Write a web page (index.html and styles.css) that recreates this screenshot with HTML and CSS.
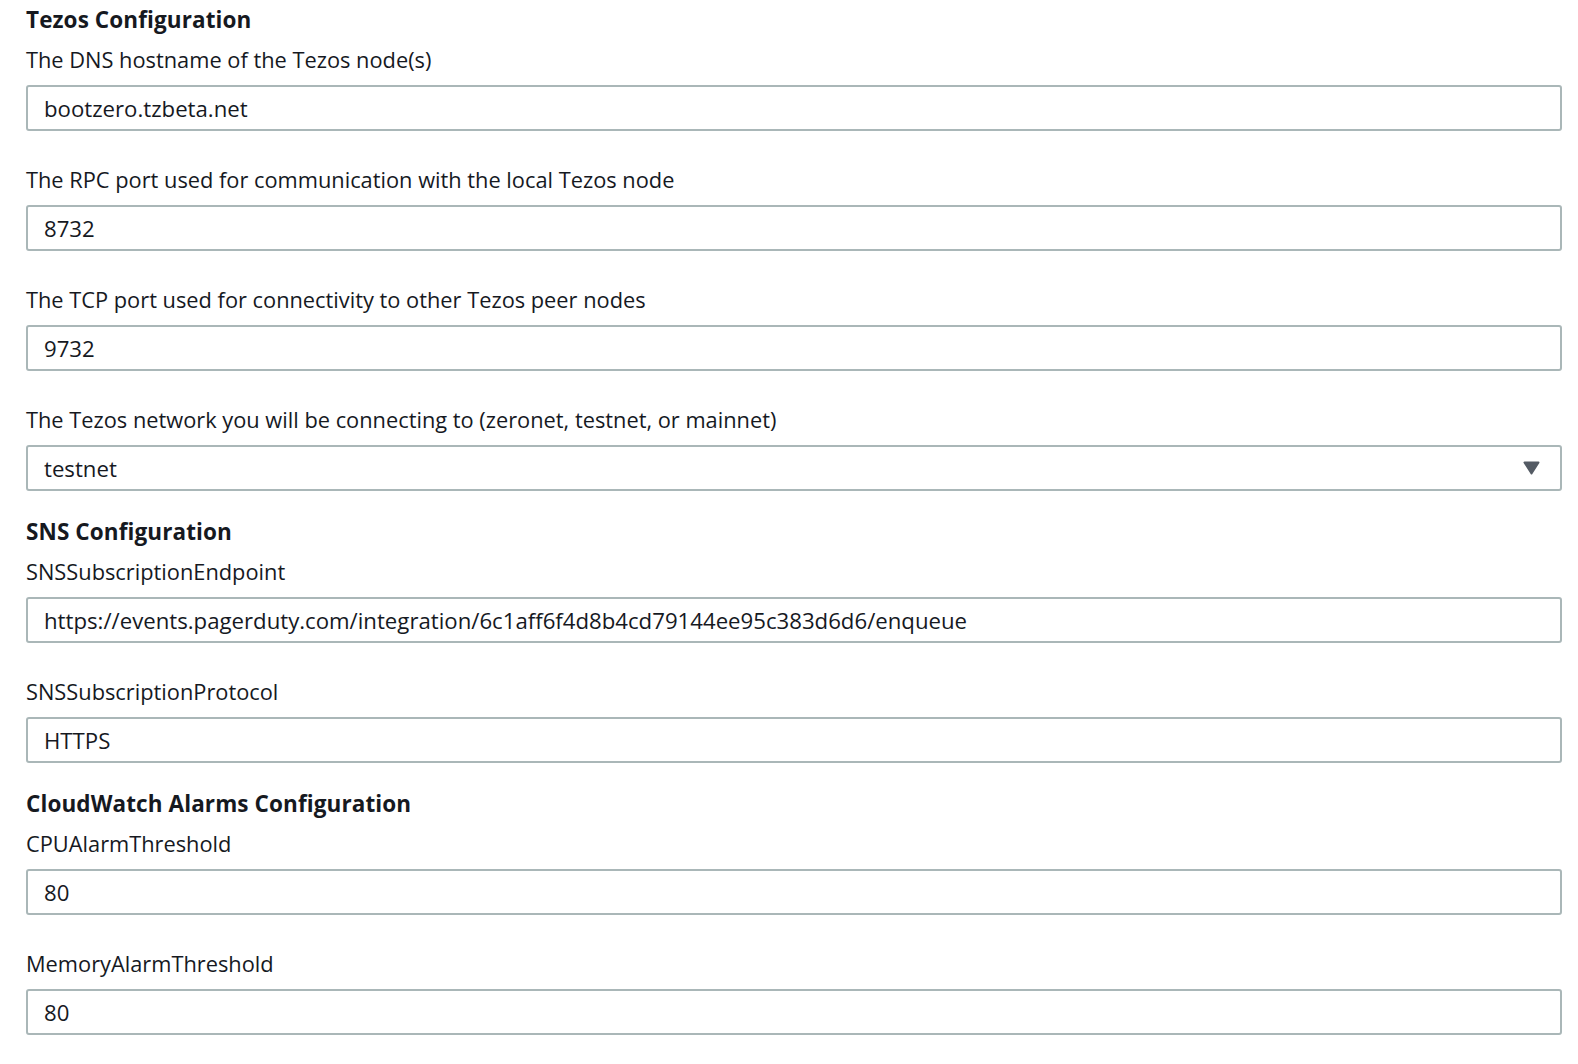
FILE: index.html
```html
<!DOCTYPE html>
<html lang="en">
<head>
<meta charset="utf-8">
<title>Stack parameters</title>
<link rel="stylesheet" href="styles.css">
</head>
<body>
<main class="form">
  <section class="section">
    <h2 class="section-title">Tezos Configuration</h2>
    <div class="field">
      <label class="label" for="f1">The DNS hostname of the Tezos node(s)</label>
      <input class="input" id="f1" type="text" value="bootzero.tzbeta.net">
    </div>
    <div class="field">
      <label class="label" for="f2">The RPC port used for communication with the local Tezos node</label>
      <input class="input" id="f2" type="text" value="8732">
    </div>
    <div class="field">
      <label class="label" for="f3">The TCP port used for connectivity to other Tezos peer nodes</label>
      <input class="input" id="f3" type="text" value="9732">
    </div>
    <div class="field">
      <label class="label" for="f4">The Tezos network you will be connecting to (zeronet, testnet, or mainnet)</label>
      <div class="select-wrap">
        <select class="input select" id="f4">
          <option>zeronet</option>
          <option selected>testnet</option>
          <option>mainnet</option>
        </select>
        <svg class="caret" width="17" height="14" viewBox="0 0 17 14" aria-hidden="true">
          <path d="M1.5 1.5 H15.5 L8.5 12.5 Z" fill="#545b64" stroke="#545b64" stroke-width="2" stroke-linejoin="round"/>
        </svg>
      </div>
    </div>
  </section>

  <section class="section">
    <h2 class="section-title">SNS Configuration</h2>
    <div class="field">
      <label class="label" for="f5">SNSSubscriptionEndpoint</label>
      <input class="input" id="f5" type="text" value="https://events.pagerduty.com/integration/6c1aff6f4d8b4cd79144ee95c383d6d6/enqueue">
    </div>
    <div class="field">
      <label class="label" for="f6">SNSSubscriptionProtocol</label>
      <input class="input" id="f6" type="text" value="HTTPS">
    </div>
  </section>

  <section class="section">
    <h2 class="section-title">CloudWatch Alarms Configuration</h2>
    <div class="field">
      <label class="label" for="f7">CPUAlarmThreshold</label>
      <input class="input" id="f7" type="text" value="80">
    </div>
    <div class="field">
      <label class="label" for="f8">MemoryAlarmThreshold</label>
      <input class="input" id="f8" type="text" value="80">
    </div>
  </section>
</main>
</body>
</html>
```

FILE: styles.css
```css
html, body {
  margin: 0;
  padding: 0;
  background: #ffffff;
}

body {
  font-family: "Open Sans", "Noto Sans", "Liberation Sans", sans-serif;
  color: #16191f;
}

.form {
  padding: 0 16px 0 26px;
  display: flex;
  flex-direction: column;
}

.section + .section {
  margin-top: 21px;
}

.section-title {
  margin: 0 0 5px;
  font-size: 22.5px;
  font-weight: 700;
  line-height: 40px;
  height: 40px;
  letter-spacing: 0.1px;
}

.field {
  display: flex;
  flex-direction: column;
}

.field + .field {
  margin-top: 34px;
}

.label {
  font-size: 21.8px;
  line-height: 30px;
  height: 30px;
  margin-bottom: 10px;
  white-space: nowrap;
}

.input {
  box-sizing: border-box;
  width: 100%;
  height: 46px;
  margin: 0;
  border: 2px solid #aab7b8;
  border-radius: 3px;
  padding: 0 15px 0 16px;
  font-family: inherit;
  font-size: 22.2px;
  color: #16191f;
  background: #ffffff;
  outline: none;
}

.select-wrap {
  position: relative;
}

.select {
  appearance: none;
  -webkit-appearance: none;
  display: block;
}

.caret {
  position: absolute;
  right: 22px;
  top: 50%;
  transform: translateY(-50%);
  pointer-events: none;
}
```
